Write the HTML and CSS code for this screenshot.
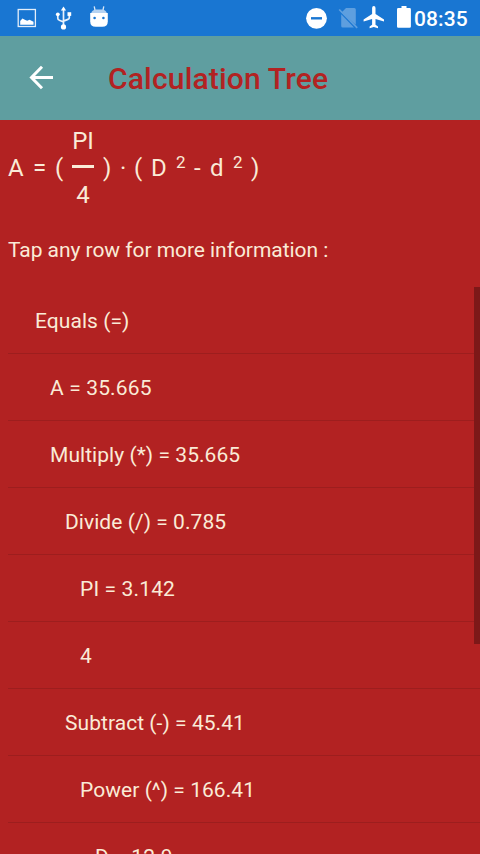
FILE: index.html
```html
<!DOCTYPE html>
<html lang="en">
<head>
<meta charset="utf-8">
<title>Calculation Tree</title>
<link rel="stylesheet" href="styles.css">
</head>
<body>
<div class="status">
  <svg class="status-icons" width="110" height="36" viewBox="0 0 110 36">
    <g fill="none" stroke="#e3eefa" stroke-width="1.3"><rect x="18.2" y="9.5" width="17.2" height="17"/></g>
    <path fill="#fff" d="M20.2 24.800V21l2.200-2.600 3 1.700 1.800.6 2.300-1 4 2.100v3z"/>
    <g fill="none" stroke="#e8f1fb" stroke-width="1.7"><path d="M63.5 9v18M57.8 14.5v3.8q0 1.6 1.6 2l4.100 1.700M69.300 14v3.700q0 1.300-1.400 1.700l-4.400 1.700"/></g>
    <g fill="#fff"><path d="M63.500 6.500l2.600 4h-5.200z"/><circle cx="57.800" cy="14.300" r="1.900"/><rect x="67.500" y="12.200" width="3.700" height="3.700"/><circle cx="63.500" cy="26.900" r="2.600"/></g>
    <path fill="#fff" d="M90.200 13h17.600v8.200q0 5.600-5.600 5.600h-6.400q-5.600 0-5.600-5.600z"/>
    <path fill="#b5d2f1" d="M91.200 13q1.200-3.500 5-3.500h5.600q3.800 0 5 3.500z"/>
    <path fill="none" stroke="#d7e7f8" stroke-width="1.300" d="M95 10l-.8-3.700M103 10l.8-3.700"/>
    <g fill="#1976d2"><circle cx="94.600" cy="18" r="1.300"/><circle cx="103.400" cy="18" r="1.300"/></g>
  </svg>
  <svg class="status-icons" width="110" height="36" viewBox="302 0 110 36">
    <circle cx="316.5" cy="18.3" r="10.4" fill="#fff"/><rect x="311" y="17.1" width="11" height="2.4" fill="#1976d2"/>
    <path fill="#5e9fdf" d="M341.5 12.5L346 8h8.3q1.500 0 1.500 1.500v15.200zM341.200 14.200L354 27.400h-11.300q-1.500 0-1.500-1.500z"/>
    <path stroke="#5e9fdf" stroke-width="1.700" d="M339.200 9.500l18 18.300"/>
    <path fill="#fff" d="M384 21.600v-2.100l-8.500-5.400V8q0-1.900-1.700-1.900T372.100 8v6.100l-8.500 5.400v2.100l8.500-2.700v5.800l-2.500 1.900v1.700l4.200-1.300 4.200 1.300v-1.700l-2.500-1.900v-5.800z"/>
    <path fill="#fff" d="M401.500 6h5v2.100h3.100q1.300 0 1.300 1.300v17.100q0 1.300-1.300 1.300h-11.300q-1.300 0-1.300-1.300V9.400q0-1.300 1.300-1.300h3.200z"/>
  </svg>
  <span class="clock">08:35</span>
</div>
<header class="bar">
  <svg class="back" width="26" height="26" viewBox="0 0 26 26"><path fill="none" stroke="#fff" stroke-width="3" d="M25 13.500H4M14 2.700L3.500 13.500l10.500 10.700"/></svg>
  <h1>Calculation Tree</h1>
</header>
<main>
  <div class="formula">
    <span class="t-a">A</span><span class="t-eq">=</span><span class="t-open">(</span>
    <span class="fraction"><span>PI</span><i class="rule"></i><span>4</span></span>
    <span class="t-close">)</span><span class="t-dot">·</span><span class="t-open2">(</span><span class="t-d">D</span><span class="exp">2</span><span class="t-minus">-</span><span class="t-d2">d</span><span class="exp">2</span><span>)</span>
  </div>
  <p class="hint">Tap any row for more information :</p>
  <div class="tree">
    <ul class="rows">
      <li class="l0">Equals (=)</li>
      <li class="l1 wide">A = 35.665</li>
      <li class="l1">Multiply (*) = 35.665</li>
      <li class="l2">Divide (/) = 0.785</li>
      <li class="l3 wide">PI = 3.142</li>
      <li class="l3">4</li>
      <li class="l2">Subtract (-) = 45.41</li>
      <li class="l3">Power (^) = 166.41</li>
      <li class="l4 wide">D = 12.9</li>
    </ul>
    <div class="scrollbar"></div>
  </div>
</main>
</body>
</html>
```
FILE: styles.css
```css
* { box-sizing: border-box; }
body { margin: 0; height: 854px; overflow: hidden; display: flex; flex-direction: column; background: #b22222; color: #faebd7; font-family: Roboto, sans-serif; }
.status { flex: none; height: 36px; display: flex; background: #1976d2; color: #fff; }
.status-icons { display: block; }
.status-icons + .status-icons { margin-left: 192px; }
.clock { margin-left: 2px; font-size: 21px; font-weight: 500; line-height: 38px; letter-spacing: .1px; }
.bar { flex: none; height: 84px; display: flex; align-items: center; padding-left: 28px; background: #5f9ea0; }
.back { flex: none; margin-top: -2px; }
h1 { margin: 2px 0 0 54px; font-size: 30px; line-height: 36px; font-weight: 500; letter-spacing: .18px; color: #b22222; white-space: nowrap; }
main { flex: 1; min-height: 0; display: flex; flex-direction: column; }
.formula { flex: none; height: 96px; padding-left: 8px; display: flex; align-items: center; font-size: 24px; line-height: 28px; }
.formula > span { flex: none; }
.t-a { width: 25px; }
.t-eq { width: 22px; }
.t-open { width: 17px; }
.fraction { width: 22px; height: 96px; display: flex; flex-direction: column; align-items: center; justify-content: space-between; padding: 7px 0 7px; }
.rule { width: 22px; height: 3px; margin-top: -4px; background: #faebd7; }
.t-close { width: 17px; margin-left: 9px; }
.t-dot { width: 14px; }
.t-open2 { width: 17px; }
.t-d { width: 25px; }
.exp { width: 18px; font-size: 17px; line-height: 20px; margin-top: -12px; }
.t-minus { width: 16px; }
.t-d2 { width: 23px; }
.hint { flex: none; margin: 0; height: 71px; padding: 21px 8px 0; font-size: 21px; line-height: 26px; letter-spacing: -.05px; }
.tree { flex: 1; min-height: 0; display: flex; position: relative; overflow: hidden; }
.rows { flex: 1; margin: 0 0 0 8px; padding: 0; list-style: none; }
.rows li { height: 67px; border-bottom: 1px solid #9d1e1e; font-size: 21px; line-height: 68px; letter-spacing: .05px; white-space: nowrap; }
.rows .wide { letter-spacing: .14px; }
.rows .l0 { padding-left: 27px; }
.rows .l1 { padding-left: 42px; }
.rows .l2 { padding-left: 57px; }
.rows .l3 { padding-left: 72px; }
.rows .l4 { padding-left: 87px; }
.scrollbar { position: absolute; top: 0; right: 0; width: 6px; height: 357px; background: #7d1818; }
```
